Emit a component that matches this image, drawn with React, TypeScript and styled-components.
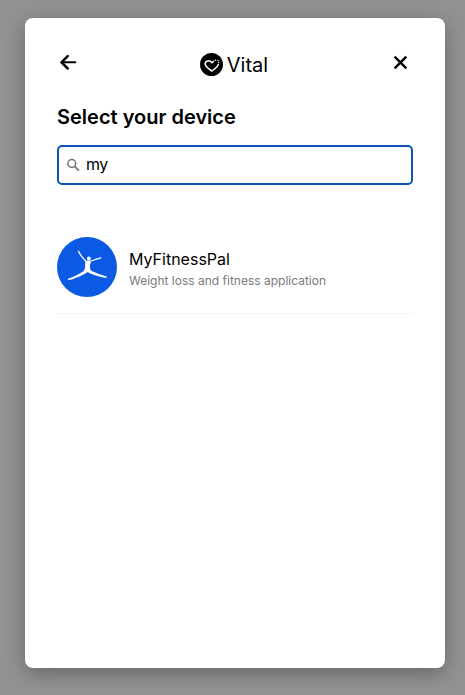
import React, { useState } from 'react';
import styled, { createGlobalStyle } from 'styled-components';

const GlobalStyle = createGlobalStyle`
  *, *::before, *::after { box-sizing: border-box; }
  body {
    margin: 0;
    background: #929292;
    font-family: Inter, 'Liberation Sans', sans-serif;
    color: #000;
  }
`;

const Page = styled.div`
  display: flex;
  justify-content: center;
  height: 100vh;
  padding: 18px 20px 27px 25px;
  overflow: hidden;
`;

const Dialog = styled.main`
  display: flex;
  flex-direction: column;
  width: 420px;
  height: 650px;
  padding: 32px;
  background: #fff;
  border-radius: 8px;
  box-shadow: 0 10px 15px -3px rgba(0, 0, 0, 0.1), 0 4px 22px rgba(0, 0, 0, 0.22);
`;

const Header = styled.header`
  display: flex;
  align-items: flex-start;
  justify-content: space-between;
  height: 28px;
`;

const IconButton = styled.button`
  display: flex;
  width: 24px;
  height: 24px;
  padding: 0;
  border: 0;
  background: none;
  color: #000;
`;

const Brand = styled.div`
  display: flex;
  align-items: center;
  gap: 4px;
  height: 28px;
  padding-right: 2px;
  font-size: 20px;
  line-height: 28px;
`;

const BrandName = styled.span`
  padding-top: 2px;
`;

const Title = styled.h1`
  margin: 25px 0 0;
  font-size: 20px;
  line-height: 28px;
  font-weight: 600;
`;

const SearchField = styled.label`
  display: flex;
  align-items: center;
  gap: 6px;
  height: 40px;
  margin-top: 14px;
  padding: 0 7px;
  border: 2px solid #0b54b8;
  border-radius: 5px;
`;

const SearchInput = styled.input`
  flex: 1;
  min-width: 0;
  padding: 0 0 2px;
  border: 0;
  outline: 0;
  background: none;
  color: #000;
  font: 400 16px/24px Inter, 'Liberation Sans', sans-serif;
  letter-spacing: -0.6px;
`;

const DeviceList = styled.ul`
  margin: 52px 0 0;
  padding: 0;
  list-style: none;
`;

const DeviceRow = styled.li`
  display: flex;
  align-items: center;
  gap: 12px;
  padding-bottom: 16px;
  border-bottom: 1px solid #f3f3f3;
`;

const DeviceText = styled.div`
  padding-top: 3px;
`;

const DeviceName = styled.div`
  font-size: 16px;
  line-height: 24px;
`;

const DeviceDescription = styled.div`
  font-size: 12px;
  line-height: 20px;
  color: #7b7b7b;
`;

const ArrowIcon = () => (
  <svg width="24" height="24" viewBox="0 0 24 24" fill="none" stroke="currentColor" strokeWidth="2.5" strokeLinecap="round" strokeLinejoin="round">
    <path d="M10.7 6.2 4.5 12.3l6.2 6.2" />
    <path d="M4.7 12.3h13.6" strokeWidth="2.1" />
  </svg>
);

const CloseIcon = () => (
  <svg width="24" height="24" viewBox="0 0 24 24" stroke="currentColor" strokeWidth="2.4">
    <path d="m5.6 6.6 11.7 11.7M17.3 6.6 5.6 18.3" />
  </svg>
);

const BrandMark = () => (
  <svg width="23" height="23" viewBox="0 0 23 23" fill="none">
    <circle cx="11.5" cy="11.5" r="11.5" fill="#000" />
    <path d="m13.5 8.2-1.6 1.6C9.8 6.8 5.2 7.4 5.2 11c0 2.6 3.6 4.7 6.5 7.1 3-2.2 5.9-4.1 6.6-6.7" stroke="#fff" strokeWidth="1.5" strokeLinecap="round" strokeLinejoin="round" />
    <g fill="#fff">
      <circle cx="15.4" cy="7.3" r=".75" />
      <circle cx="18" cy="7.5" r=".65" />
      <circle cx="18.7" cy="9.5" r=".65" />
    </g>
  </svg>
);

const SearchIcon = () => (
  <svg width="14" height="14" viewBox="0 0 14 14" fill="none" stroke="#737373">
    <circle cx="5.8" cy="5.5" r="3.9" strokeWidth="1.5" />
    <path d="m8.7 8.4 4.2 4.2" strokeWidth="1.7" />
  </svg>
);

const FitnessLogo = () => (
  <svg width="60" height="60" viewBox="0 0 60 60">
    <circle cx="30" cy="30" r="30" fill="#0c59e3" />
    <g fill="#fff">
      <ellipse cx="31.9" cy="21.6" rx="1.9" ry="2.1" />
      <path d="M28.2 24.4 30 23.4l3.4.4.4 1.7-.9 3.5.4 4.5-2.5 1.8-3.6-.9.9-4.4Z" />
      <path d="M27.5 32.8c-1.5 2.6-6.9 4.9-12.2 7.5l-4.4 1.4.2 1.2 3.8-.5C22 39.9 27.1 38 30.4 35.1c3.5 2.3 9.1 3.8 15.9 5.3l3.5.3.2-.9-3.5-1.2c-5.2-2-10.7-3.4-13.4-5.8Z" />
    </g>
    <g fill="none" stroke="#fff" strokeLinecap="round" strokeLinejoin="round">
      <path d="m21.5 14.4 2.5 4.3 5.1 6" strokeWidth="1.3" />
      <path d="m32.8 24.4 4.2-1.5 6.8-2" strokeWidth="1.1" />
    </g>
  </svg>
);

interface Device {
  name: string;
  description: string;
}

const devices: Device[] = [
  { name: 'MyFitnessPal', description: 'Weight loss and fitness application' },
];

export default function App() {
  const [query, setQuery] = useState('my');
  const matches = devices.filter(({ name }) => name.toLowerCase().includes(query.toLowerCase()));

  return (
    <>
      <GlobalStyle />
      <Page>
        <Dialog>
          <Header>
            <IconButton aria-label="Back"><ArrowIcon /></IconButton>
            <Brand><BrandMark /><BrandName>Vital</BrandName></Brand>
            <IconButton aria-label="Close"><CloseIcon /></IconButton>
          </Header>
          <Title>Select your device</Title>
          <SearchField>
            <SearchIcon />
            <SearchInput aria-label="Search devices" value={query} onChange={(e) => setQuery(e.target.value)} />
          </SearchField>
          <DeviceList>
            {matches.map((device) => (
              <DeviceRow key={device.name}>
                <FitnessLogo />
                <DeviceText>
                  <DeviceName>{device.name}</DeviceName>
                  <DeviceDescription>{device.description}</DeviceDescription>
                </DeviceText>
              </DeviceRow>
            ))}
          </DeviceList>
        </Dialog>
      </Page>
    </>
  );
}
